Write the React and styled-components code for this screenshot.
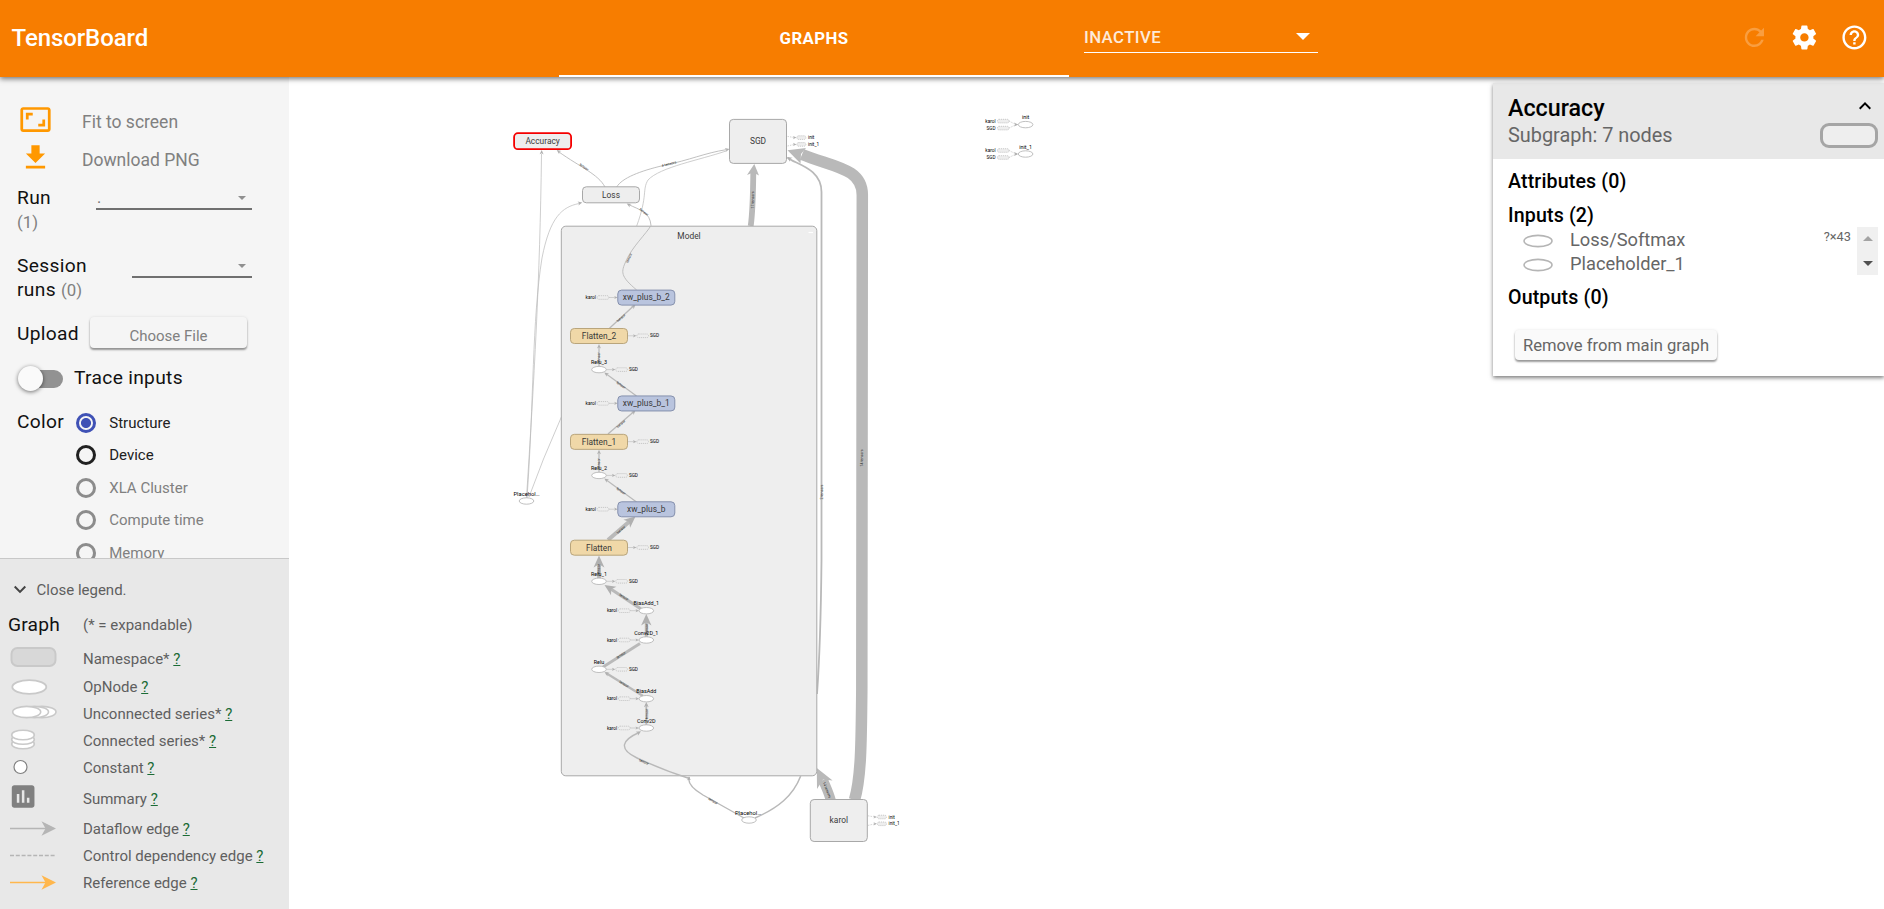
import React from "react";
import styled, { createGlobalStyle } from "styled-components";

const Global = createGlobalStyle`
  * { box-sizing: border-box; }
  body { margin: 0; background: #fff; font-family: Roboto, "Noto Sans", sans-serif; overflow: hidden; }
`;

const Page = styled.div`
  width: 100%;
  height: 909px;
  display: flex;
  flex-direction: column;
  overflow: hidden;
`;

/* ---------- top bar ---------- */

const TopBar = styled.header`
  position: relative;
  z-index: 2;
  flex: none;
  height: 77px;
  display: flex;
  align-items: center;
  background: #f77d00;
  color: #fff;
  box-shadow: 0 2px 5px rgba(0, 0, 0, 0.5);
`;

const Brand = styled.div`
  width: 559px;
  padding-left: 11.5px;
  padding-bottom: 2px;
  font-size: 24px;
  font-weight: 500;
  letter-spacing: -0.1px;
`;

const Tab = styled.div`
  width: 510px;
  height: 77px;
  border-bottom: 2px solid #fff;
  display: flex;
  align-items: center;
  justify-content: center;
  font-size: 16.8px;
  font-weight: 700;
  letter-spacing: 0.4px;
`;

const InactiveMenu = styled.div`
  width: 234px;
  height: 31px;
  margin: 0 0 2px 15px;
  padding: 0 8px 1px 0;
  display: flex;
  align-items: center;
  justify-content: space-between;
  border-bottom: 1px solid #fff;
  font-size: 16.8px;
  font-weight: 500;
  letter-spacing: 0.4px;
  span { opacity: 0.85; }
`;

const Triangle = styled.i`
  width: 0;
  height: 0;
  border-left: ${(p) => p.$w / 2}px solid transparent;
  border-right: ${(p) => p.$w / 2}px solid transparent;
  border-${(p) => (p.$up ? "bottom" : "top")}: ${(p) => p.$w / 2}px solid ${(p) => p.$color};
`;

const BarActions = styled.div`
  margin-left: auto;
  padding: 0 15.6px 3px 0;
  display: flex;
  gap: 21.2px;
`;

const Icon = styled.svg`
  display: block;
  flex: none;
  width: ${(p) => p.$size}px;
  height: ${(p) => p.$size}px;
  fill: ${(p) => p.$color || "currentColor"};
  opacity: ${(p) => (p.$dim ? 0.25 : 1)};
`;

const paths = {
  refresh: "M17.65 6.35C16.2 4.9 14.21 4 12 4c-4.42 0-7.99 3.58-7.99 8s3.57 8 7.99 8c3.73 0 6.84-2.55 7.73-6h-2.08c-.82 2.33-3.04 4-5.65 4-3.31 0-6-2.69-6-6s2.69-6 6-6c1.66 0 3.14.69 4.22 1.78L13 11h7V4l-2.35 2.35z",
  settings: "M19.43 12.98c.04-.32.07-.64.07-.98s-.03-.66-.07-.98l2.11-1.65c.19-.15.24-.42.12-.64l-2-3.46c-.12-.22-.39-.3-.61-.22l-2.49 1c-.52-.4-1.08-.73-1.69-.98l-.38-2.65C14.46 2.18 14.25 2 14 2h-4c-.25 0-.46.18-.49.42l-.38 2.65c-.61.25-1.17.59-1.69.98l-2.49-1c-.23-.09-.49 0-.61.22l-2 3.46c-.13.22-.07.49.12.64l2.11 1.65c-.04.32-.07.65-.07.98s.03.66.07.98l-2.11 1.65c-.19.15-.24.42-.12.64l2 3.46c.12.22.39.3.61.22l2.49-1c.52.4 1.08.73 1.69.98l.38 2.65c.03.24.24.42.49.42h4c.25 0 .46-.18.49-.42l.38-2.65c.61-.25 1.17-.59 1.69-.98l2.49 1c.23.09.49 0 .61-.22l2-3.46c.12-.22.07-.49-.12-.64l-2.11-1.65zM12 15.5c-1.93 0-3.5-1.57-3.5-3.5s1.57-3.5 3.5-3.5 3.5 1.57 3.5 3.5-1.57 3.5-3.5 3.5z",
  help: "M11 18h2v-2h-2v2zm1-16C6.48 2 2 6.48 2 12s4.48 10 10 10 10-4.48 10-10S17.52 2 12 2zm0 18c-4.41 0-8-3.59-8-8s3.59-8 8-8 8 3.59 8 8-3.59 8-8 8zm0-14c-2.21 0-4 1.79-4 4h2c0-1.1.9-2 2-2s2 .9 2 2c0 2-3 1.75-3 5h2c0-2.25 3-2.5 3-5 0-2.21-1.79-4-4-4z",
  fit: "M19 12h-2v3h-3v2h5v-5zM7 9h3V7H5v5h2V9zm14-6H3c-1.1 0-2 .9-2 2v14c0 1.1.9 2 2 2h18c1.1 0 2-.9 2-2V5c0-1.1-.9-2-2-2zm0 16.01H3V4.99h18v14.02z",
  download: "M19 9h-4V3H9v6H5l7 7 7-7zM5 18v2h14v-2H5z",
  down: "M7.41 7.84L12 12.42l4.59-4.58L18 9.25l-6 6-6-6z",
  up: "M7.41 15.41L12 10.83l4.59 4.58L18 14l-6-6-6 6z",
  summary: "M19 3H5c-1.1 0-2 .9-2 2v14c0 1.1.9 2 2 2h14c1.1 0 2-.9 2-2V5c0-1.1-.9-2-2-2zM9 17H7v-7h2v7zm4 0h-2V7h2v10zm4 0h-2v-4h2v4z",
};

const Glyph = ({ name, size, color, dim }) => (
  <Icon viewBox="0 0 24 24" $size={size} $color={color} $dim={dim}>
    <path d={paths[name]} />
  </Icon>
);

/* ---------- sidebar ---------- */

const Body = styled.main`
  flex: 1;
  min-height: 0;
  display: flex;
`;

const Sidebar = styled.aside`
  width: 289px;
  flex: none;
  display: flex;
  flex-direction: column;
`;

const Controls = styled.section`
  height: 481px;
  padding: 25px 0 0 17px;
  overflow: hidden;
  background: #f5f5f5;
`;

const ActionRow = styled.div`
  height: 38px;
  display: flex;
  align-items: center;
  gap: 30px;
  padding: 0 0 3px 2px;
  font-size: 17.5px;
  color: #808080;
  span { padding-top: 5px; }
`;

const PickerRow = styled.div`
  height: 68px;
  padding-top: ${(p) => p.$top}px;
  display: flex;
  justify-content: space-between;
  padding-right: 37px;
  align-items: flex-start;
`;

const Label = styled.div`
  font-size: 19.2px;
  line-height: 24.4px;
  letter-spacing: 0.32px;
  color: #111;
  small { font-size: 16.8px; letter-spacing: 0; color: #808080; }
`;

const Picker = styled.div`
  width: ${(p) => p.$w}px;
  height: 24px;
  padding: 1px 6px 0 1px;
  display: flex;
  align-items: center;
  justify-content: space-between;
  border-bottom: 2px solid #707070;
  font-size: 16px;
  color: #707070;
`;

const UploadRow = styled.div`
  height: 40px;
  display: flex;
  align-items: center;
  gap: 11px;
`;

const UploadSlot = styled.div`
  padding-bottom: 3px;
`;

const RaisedButton = styled.div`
  width: ${(p) => p.$w}px;
  height: ${(p) => p.$h}px;
  padding-top: ${(p) => p.$drop || 0}px;
  display: flex;
  align-items: center;
  justify-content: center;
  border-radius: 4px;
  background: ${(p) => p.$bg};
  color: ${(p) => p.$color};
  font-size: ${(p) => p.$font}px;
  box-shadow: 0 2px 2px rgba(0, 0, 0, 0.38), 0 0 3px rgba(0, 0, 0, 0.1);
`;

const ToggleRow = styled.div`
  height: 49px;
  display: flex;
  align-items: center;
  gap: 11px;
`;

const Track = styled.div`
  width: 46px;
  height: 18px;
  display: flex;
  align-items: center;
  border-radius: 9px;
  background: linear-gradient(90deg, transparent 8px, #929292 8px);
`;

const Knob = styled.div`
  width: 25px;
  height: 25px;
  margin-left: 1px;
  border-radius: 50%;
  background: #fafafa;
  box-shadow: 0 1px 4px rgba(0, 0, 0, 0.55);
`;

const ColorRow = styled.div`
  display: flex;
  gap: 11.5px;
  padding-top: 7px;
`;

const RadioList = styled.div`
  display: flex;
  flex-direction: column;
  padding-top: 3px;
`;

const RadioItem = styled.div`
  height: 32.4px;
  display: flex;
  align-items: flex-start;
  gap: 13.6px;
  font-size: 15px;
  line-height: 20px;
  color: ${(p) => (p.$off ? "#808080" : "#212121")};
`;

const Dot = styled.i`
  width: 20px;
  height: 20px;
  border-radius: 50%;
  border: 3px solid ${(p) => (p.$on ? "#3f51b5" : p.$off ? "#8c8c8c" : "#212121")};
  background: ${(p) => (p.$on ? "radial-gradient(circle, #3f51b5 4.6px, transparent 5.4px)" : "none")};
`;

const Legend = styled.section`
  flex: 1;
  border-top: 1px solid #c8c8c8;
  background: #e8e8e8;
  color: #5f5f5f;
  font-size: 15px;
  padding-top: 17.4px;
`;

const LegendToggle = styled.div`
  height: 27px;
  padding-left: 8px;
  display: flex;
  align-items: center;
  gap: 4.5px;
`;

const LegendTitle = styled.div`
  height: 39.4px;
  padding: 3.4px 0 0 8px;
  display: flex;
  align-items: center;
  strong { width: 75px; font-weight: 400; font-size: 19.2px; letter-spacing: 0.2px; color: #111; }
`;

const LegendRow = styled.div`
  height: ${(p) => p.$h}px;
  padding-left: 8px;
  display: flex;
  align-items: center;
  svg { flex: none; width: 75px; height: 27px; overflow: visible; }
  u { color: #1b6b35; }
`;

const Line = ({ color }) => (
  <>
    <path d="M2 13.5H42" stroke={color} strokeWidth="1.6" />
    <path d="M33.5 6.2L48 13.5l-14.5 7.3 4-7.3z" fill={color} />
  </>
);

const legend = [
  ["Namespace*", 33, <rect x="3.5" y="2" width="44" height="18" rx="6" fill="#d8d8d8" stroke="#c9c9c9" strokeWidth="2" />],
  ["OpNode", 22, <ellipse cx="21.3" cy="14" rx="17" ry="6.8" fill="#fff" stroke="#c9c9c9" strokeWidth="1.8" />],
  ["Unconnected series*", 32, (
    <g fill="#fff" stroke="#c9c9c9" strokeWidth="1.6">
      <ellipse cx="34" cy="12" rx="14" ry="5.6" />
      <ellipse cx="26.5" cy="12" rx="14" ry="5.6" />
      <ellipse cx="18.7" cy="12" rx="14" ry="5.6" />
    </g>
  )],
  ["Connected series*", 22, (
    <g fill="#fff" stroke="#c9c9c9" strokeWidth="1.6">
      <ellipse cx="15" cy="17" rx="11.3" ry="4.8" />
      <ellipse cx="15" cy="12.5" rx="11.3" ry="4.8" />
      <ellipse cx="15" cy="8" rx="11.3" ry="4.8" />
    </g>
  )],
  ["Constant", 32, <circle cx="12.5" cy="13" r="6.5" fill="#fff" stroke="#808080" strokeWidth="1.2" />],
  ["Summary", 30, <path transform="translate(0 -3.6) scale(1.26)" d={paths.summary} fill="#808080" />],
  ["Dataflow edge", 30, <Line color="#b5b5b5" />],
  ["Control dependency edge", 24, <path d="M2 13.5H47" stroke="#b5b5b5" strokeWidth="1.4" strokeDasharray="4 1.8" />],
  ["Reference edge", 30, <Line color="#ffb74d" />],
];

/* ---------- graph ---------- */

const Stage = styled.div`
  position: relative;
  flex: 1;
  min-width: 0;
`;

const GraphSvg = styled.svg`
  display: block;
  width: 1203px;
  height: 832px;
`;

const NodeText = styled.text`
  font-size: 8.4px;
  fill: #3a3a3a;
  text-anchor: middle;
`;

const TinyText = styled.text`
  font-size: ${(p) => p.$size || 4.7}px;
  fill: #000;
  text-anchor: ${(p) => p.$anchor || "middle"};
`;

const Edge = styled.path`
  fill: none;
  stroke: #b9b9b9;
  stroke-width: ${(p) => p.$w || 0.7}px;
`;

const EdgeText = styled.text`
  font-size: 3.6px;
  fill: #222;
  text-anchor: middle;
`;

const tones = {
  plain: ["#eeeeee", "#a8a8a8"],
  sand: ["#f0d8a8", "#b9a57c"],
  blue: ["#b9c4de", "#8590ad"],
  picked: ["#eeeeee", "#f50000"],
};

const Box = ({ x, y, h = 15, w = 57, tone = "plain", label }) => (
  <g>
    <rect x={x - w / 2} y={y - h / 2} width={w} height={h} rx="3.8" fill={tones[tone][0]} stroke={tones[tone][1]} strokeWidth={tone === "picked" ? 1.8 : 1} />
    <NodeText x={x} y={y + 2.8}>{label}</NodeText>
  </g>
);

const Op = ({ x, y, label, lx = 0, wide }) => (
  <g>
    <ellipse cx={x} cy={y} rx="7.3" ry="3.2" fill="#fff" stroke="#b0b0b0" strokeWidth="0.8" />
    <TinyText x={x + lx} y={y - 5.3} $size={wide ? 5.8 : 5.4}>{label}</TinyText>
  </g>
);

const Head = ({ x, y, a, s = 1 }) => (
  <path transform={`translate(${x} ${y}) rotate(${a}) scale(${s})`} d="M0 0L-4.4 -2L-3.2 0L-4.4 2z" fill="#b0b0b0" />
);

const Stub = ({ x, y, w = 11.6 }) => (
  <rect x={x} y={y - 1.8} width={w} height="3.6" rx="1.6" fill="#eee" stroke="#b8b8b8" strokeWidth="0.7" strokeDasharray="1.2 .8" />
);

const InStub = ({ x, y }) => (
  <g>
    <TinyText x={x - 21.8} y={y + 1.6} $anchor="end">karol</TinyText>
    <Stub x={x - 20.5} y={y} />
    <Edge d={`M${x - 8.8} ${y}H${x - 2}`} $w={0.6} />
    <Head x={x} y={y} a={0} s={0.8} />
  </g>
);

const OutStub = ({ x, y, label = "SGD", dy = 0 }) => (
  <g>
    <Edge d={`M${x} ${y - dy}L${x + 7} ${y}`} $w={0.6} strokeDasharray={dy ? "1.5 1" : undefined} />
    <Head x={x + 9} y={y} a={0} s={0.8} />
    <Stub x={x + 9.4} y={y} w={dy ? 9 : 11.6} />
    <TinyText x={x + (dy ? 20.5 : 22.5)} y={y + 1.6} $anchor="start">{label}</TinyText>
  </g>
);

const InitGroup = ({ y, label }) => (
  <g>
    {["karol", "SGD"].map((name, i) => (
      <g key={name}>
        <TinyText x="995.6" y={y - 3.5 + i * 7 + 1.6} $anchor="end">{name}</TinyText>
        <Stub x={997.4} y={y - 3.5 + i * 7} />
        <Edge d={`M1009 ${y - 3.5 + i * 7}L1016 ${y}`} $w={0.6} strokeDasharray="1.5 1" />
      </g>
    ))}
    <Head x={1018.4} y={y} a={0} />
    <Op x={1025.6} y={y} label={label} />
  </g>
);

const Tensor = ({ x, y, a, label = "tensor" }) => (
  <EdgeText transform={`translate(${x} ${y}) rotate(${a})`} y="1.2">{label}</EdgeText>
);

const Graph = () => (
  <GraphSvg viewBox="289 77 1203 832">
    {/* edges that leave the model block */}
    <Edge $w={1.8} d="M787.7 157.7C795 164 821.5 168 821.5 192V560C821 610 819.5 660 817 694" />
    <Head x={786.8} y={157} a={212} s={1.2} />
    <Edge $w={11.5} d="M854.5 800C861 778 861.3 745 861.8 690L862.3 195C862.3 168 833 167 802 154.5" />
    <path d="M787.5 150.3L806 148L801 154L800.5 163.5z" fill="#b9b9b9" />
    <Edge $w={5.8} d="M750.7 226C752.5 214 753 200 753.3 172" />
    <path d="M754.3 164L759 175.5L753.2 172.5L747 175z" fill="#b9b9b9" />
    <Edge $w={0.9} d="M616.7 187C622 178 640 171 663.3 165.5C690 160 705 153 726 149.7" />
    <Edge d="M636.7 226C648 195 642 190 648 180C660 167 700 160 726 151" />
    <Head x={729.5} y={149} a={-14} />
    <Edge $w={0.9} d="M605 187C598 174 580 167 559 152" />
    <Head x={556.7} y={150} a={215} />
    <Edge d="M526.5 498C534 380 540 280 541.5 154" />
    <Head x={541.7} y={150} a={-89} />
    <Edge d="M527 498C534 400 532 320 542 258C550 217 562 207 579 203.5" />
    <Head x={582.3} y={202.6} a={-12} />
    <Edge d="M529 497L543.5 459L561.5 416.7" />
    <Edge $w={10} d="M831 801C829 793 826 787 823 780" />
    <path d="M816.8 768L832.6 780.5L823 779.5L817 789z" fill="#b9b9b9" />

    <rect x="561.3" y="226.2" width="255.5" height="549.6" rx="4.5" fill="#eeeeee" stroke="#a8a8a8" strokeWidth="1" />
    <NodeText x="689" y="238.6">Model</NodeText>
    <path d="M808.5 232.5h4.5" stroke="#fff" strokeWidth="1.2" />

    {/* edges inside the model block */}
    <Edge $w={0.9} d="M636.7 290C620 276 621 272 626 261C632 247 646 234 651 225.5C650 212 640 210 628.5 204.5" />
    <Head x={626.7} y={203.6} a={208} />
    <Edge $w={1.3} d="M609.5 328.3L634 305.5" />
    <Head x={635.5} y={304.7} a={-42} />
    <Edge $w={1.2} d="M599 366V346" />
    <Head x={599} y={344} a={-90} />
    <Edge $w={1.2} d="M636.5 396L606 373.8" />
    <Head x={604.3} y={372.5} a={216} />
    <Edge $w={1.3} d="M608 434L634 411.5" />
    <Head x={635.5} y={410.5} a={-42} />
    <Edge $w={1.2} d="M599 472V452" />
    <Head x={599} y={449.8} a={-90} />
    <Edge $w={1.2} d="M636.5 502L606 479.8" />
    <Head x={604.3} y={478.5} a={216} />
    <Edge $w={4} d="M608 540L630 521" />
    <Head x={635.5} y={516.5} a={-40} s={2.6} />
    <Edge $w={3.8} d="M599 578V563" />
    <Head x={599} y={555.5} a={-90} s={2.7} />
    <Edge $w={3.2} d="M641 609L610 588.5" />
    <Head x={604.5} y={585} a={213} s={2.5} />
    <Edge $w={3} d="M646.3 637V621" />
    <Head x={646.3} y={614} a={-90} s={2.6} />
    <Edge $w={2.8} d="M603 667L640 643.5" />
    <Edge $w={2.2} d="M643 696L606 673" />
    <Head x={604.5} y={672} a={212} s={1.1} />
    <Edge $w={1.8} d="M646.3 725V704" />
    <Head x={646.3} y={702} a={-90} s={1.2} />
    <Edge $w={1.4} d="M744 818C728 809 712 800 703 795C693 789 687 783 689.3 777L689.3 778.5C672 773 650 764 637 758C618 749 622 740 639 732.5" />
    <Head x={641} y={731.3} a={-30} s={1.1} />
    <Head x={691} y={779.5} a={15} s={0.9} />
    <Edge $w={1.5} d="M800.7 776C793 796 778 808 755 818" />

    <Box x={542.6} y={141.2} h={16} tone="picked" label="Accuracy" />
    <Box x={611} y={194.8} h={16} label="Loss" />
    <Box x={758} y={141.4} h={44} label="SGD" />
    <Box x={838.8} y={820.5} h={42} label="karol" />

    {[0, 1, 2].map((i) => {
      const suffix = ["_2", "_1", ""][i];
      const dy = i * 105.85;
      return (
        <g key={i}>
          <InStub x={617.7} y={297.5 + dy} />
          <Box x={646.3} y={297.6 + dy} tone="blue" label={"xw_plus_b" + suffix} />
          <OutStub x={627.5} y={335.8 + dy} />
          <Box x={599} y={336 + dy} tone="sand" label={"Flatten" + suffix} />
          <OutStub x={606.4} y={369.6 + dy} />
          <Op x={599} y={369.6 + dy} label={"Relu_" + (3 - i)} />
          <Tensor x={599} y={357.5 + dy} a={-90} />
          <Tensor x={621} y={318 + dy} a={-42} />
        </g>
      );
    })}
    {[["BiasAdd_1", 610.7], ["Conv2D_1", 640], ["BiasAdd", 698.7], ["Conv2D", 728]].map(([label, y]) => (
      <g key={label}>
        <InStub x={639} y={y} />
        <Op x={646.3} y={y} label={label} />
      </g>
    ))}
    <OutStub x={606.4} y={669.3} />
    <Op x={599} y={669.3} label="Relu" />
    <Op x={749} y={820} label="Placehol…" lx={-1} wide />
    <Op x={526.5} y={501} label="Placehol…" wide />

    <OutStub x={787.5} y={137.6} dy={1.2} label="init" />
    <OutStub x={787.5} y={144.4} dy={-1.6} label="init_1" />
    <OutStub x={868} y={817} dy={1.2} label="init" />
    <OutStub x={868} y={823.8} dy={-1.6} label="init_1" />
    <InitGroup y={124.6} label="init" />
    <InitGroup y={154} label="init_1" />

    <Tensor x={753} y={200} a={-90} label="17 tensors" />
    <Tensor x={862} y={458} a={-90} label="14 tensors" />
    <Tensor x={822} y={492} a={-90} label="2 tensors" />
    <Tensor x={584} y={167} a={35} />
    <Tensor x={669} y={164} a={-14} label="4 tensors" />
    <Tensor x={644} y={212} a={40} />
    <Tensor x={629} y={258} a={-65} />
    <Tensor x={621} y={385} a={36} />
    <Tensor x={621} y={491} a={36} />
    <Tensor x={624} y={597} a={33} />
    <Tensor x={646.3} y={629} a={-90} />
    <Tensor x={621} y={655} a={-33} />
    <Tensor x={624} y={684} a={32} />
    <Tensor x={646.3} y={714} a={-90} />
    <Tensor x={644} y={762} a={23} />
    <Tensor x={713} y={801} a={30} />
    <Tensor x={827} y={790} a={68} label="14 tensors" />
  </GraphSvg>
);

/* ---------- info card ---------- */

const Card = styled.section`
  position: absolute;
  top: 6px;
  right: 0;
  width: 391px;
  height: 293px;
  background: #fff;
  box-shadow: 0 2px 4px rgba(0, 0, 0, 0.5);
  color: #666;
  font-size: 18.3px;
`;

const CardHead = styled.div`
  height: 76px;
  padding: 10px 6px 0 15px;
  display: flex;
  justify-content: space-between;
  background: #e8e8e8;
`;

const CardTitle = styled.div`
  display: flex;
  flex-direction: column;
  font-size: 19.9px;
  line-height: 26px;
  strong { font-weight: 500; font-size: 23.3px; line-height: 30px; color: #000; }
`;

const CardSide = styled.div`
  display: flex;
  flex-direction: column;
  align-items: flex-end;
  gap: 5px;
  padding-top: 1px;
  color: #000;
  svg { margin-right: 1px; }
`;

const Pill = styled.div`
  width: 58px;
  height: 25px;
  border: 3px solid #a5a5a5;
  border-radius: 9px;
  background: #eee;
`;

const CardBody = styled.div`
  padding: 11px 6px 0 15px;
`;

const Heading = styled.h3`
  margin: 0 0 ${(p) => p.$gap}px;
  font-size: 19.6px;
  letter-spacing: 0.15px;
  line-height: 24px;
  font-weight: 500;
  color: #000;
`;

const InputsBox = styled.div`
  height: 48px;
  margin: -1px 0 11px;
  display: flex;
`;

const InputsList = styled.div`
  flex: 1;
`;

const InputRow = styled.div`
  height: 24px;
  padding: 0 6px 0 15px;
  display: flex;
  align-items: center;
  svg { width: 30px; height: 14px; margin: 4px 17px 0 0; }
  small { margin-left: auto; font-size: 12.8px; padding-bottom: 6px; }
`;

const ScrollBar = styled.div`
  width: 21px;
  display: flex;
  flex-direction: column;
  align-items: center;
  justify-content: space-between;
  padding: 9px 0;
  background: #f0f0f0;
`;

const CardAction = styled.div`
  padding: 20px 0 0 7px;
`;

export default function App() {
  return (
    <Page>
      <Global />
      <TopBar>
        <Brand>TensorBoard</Brand>
        <Tab>GRAPHS</Tab>
        <InactiveMenu><span>INACTIVE</span><Triangle $w={14} $color="#fff" /></InactiveMenu>
        <BarActions>
          <Glyph name="refresh" size={28.8} dim />
          <Glyph name="settings" size={28.8} />
          <Glyph name="help" size={28.8} />
        </BarActions>
      </TopBar>
      <Body>
        <Sidebar>
          <Controls>
            <ActionRow><Glyph name="fit" size={33} color="#ff9800" /><span>Fit to screen</span></ActionRow>
            <ActionRow><Glyph name="download" size={33} color="#ff9800" /><span>Download PNG</span></ActionRow>
            <PickerRow $top={8}>
              <Label>Run<br /><small>(1)</small></Label>
              <Picker $w={156}>.<Triangle $w={8} $color="#909090" /></Picker>
            </PickerRow>
            <PickerRow $top={8}>
              <Label>Session<br />runs <small>(0)</small></Label>
              <Picker $w={120}><span /><Triangle $w={8} $color="#909090" /></Picker>
            </PickerRow>
            <UploadRow>
              <Label>Upload</Label>
              <UploadSlot>
                <RaisedButton $w={157} $h={31} $bg="#f5f5f5" $color="#808080" $font={15} $drop={7}>Choose File</RaisedButton>
              </UploadSlot>
            </UploadRow>
            <ToggleRow>
              <Track><Knob /></Track>
              <Label>Trace inputs</Label>
            </ToggleRow>
            <ColorRow>
              <Label>Color</Label>
              <RadioList>
                <RadioItem><Dot $on />Structure</RadioItem>
                <RadioItem><Dot />Device</RadioItem>
                {["XLA Cluster", "Compute time", "Memory"].map((t) => (
                  <RadioItem key={t} $off><Dot $off />{t}</RadioItem>
                ))}
              </RadioList>
            </ColorRow>
          </Controls>
          <Legend>
            <LegendToggle><Glyph name="down" size={24} color="#444" />Close legend.</LegendToggle>
            <LegendTitle><strong>Graph</strong>(* = expandable)</LegendTitle>
            {legend.map(([label, h, art]) => (
              <LegendRow key={label} $h={h}>
                <svg>{art}</svg>
                <span>{label} <u>?</u></span>
              </LegendRow>
            ))}
          </Legend>
        </Sidebar>
        <Stage>
          <Graph />
          <Card>
            <CardHead>
              <CardTitle><strong>Accuracy</strong>Subgraph: 7 nodes</CardTitle>
              <CardSide><Glyph name="up" size={24} /><Pill /></CardSide>
            </CardHead>
            <CardBody>
              <Heading $gap={10}>Attributes (0)</Heading>
              <Heading $gap={0}>Inputs (2)</Heading>
              <InputsBox>
                <InputsList>
                  {[["Loss/Softmax", "?×43"], ["Placeholder_1", ""]].map(([name, shape]) => (
                    <InputRow key={name}>
                      <svg><ellipse cx="15" cy="7" rx="14" ry="5.6" fill="#fff" stroke="#b5b5b5" strokeWidth="1.6" /></svg>
                      {name}
                      <small>{shape}</small>
                    </InputRow>
                  ))}
                </InputsList>
                <ScrollBar><Triangle $w={10} $up $color="#a3a3a3" /><Triangle $w={10} $color="#505050" /></ScrollBar>
              </InputsBox>
              <Heading $gap={0}>Outputs (0)</Heading>
              <CardAction>
                <RaisedButton $w={202} $h={30} $bg="#fafafa" $color="#666" $font={16.6}>Remove from main graph</RaisedButton>
              </CardAction>
            </CardBody>
          </Card>
        </Stage>
      </Body>
    </Page>
  );
}
